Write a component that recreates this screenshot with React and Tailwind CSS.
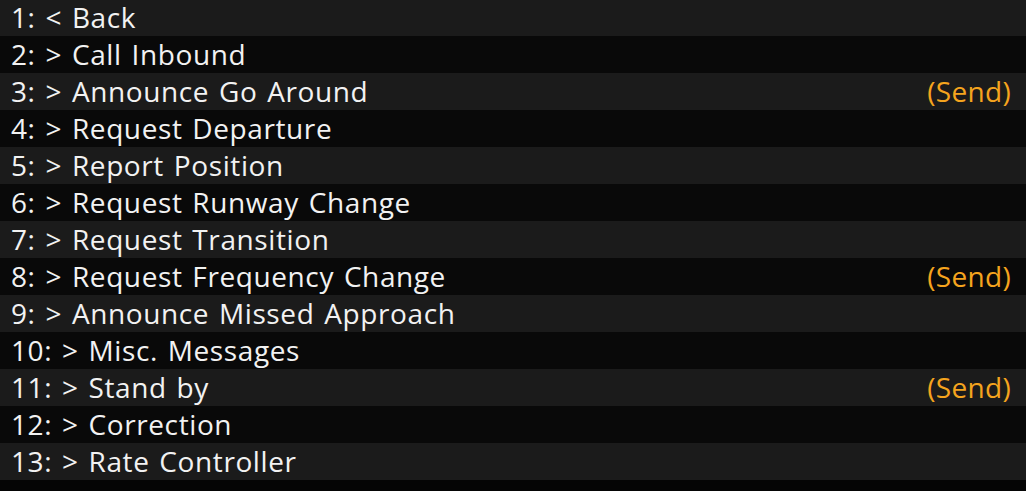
import React from "react";

const items = [
  { label: "1: < Back" },
  { label: "2: > Call Inbound" },
  { label: "3: > Announce Go Around", send: true },
  { label: "4: > Request Departure" },
  { label: "5: > Report Position" },
  { label: "6: > Request Runway Change" },
  { label: "7: > Request Transition" },
  { label: "8: > Request Frequency Change", send: true },
  { label: "9: > Announce Missed Approach" },
  { label: "10: > Misc. Messages" },
  { label: "11: > Stand by", send: true },
  { label: "12: > Correction" },
  { label: "13: > Rate Controller" },
];

export default function App() {
  return (
    <div
      className="w-[1026px] h-[491px] overflow-hidden bg-[#050505] text-[#f2f2f2]"
      style={{ fontFamily: '"Open Sans", "Noto Sans", sans-serif' }}
    >
      <div className="flex flex-col">
        {items.map((item, i) => (
          <div
            key={i}
            className={
              (i === 0 ? "h-[36px] pb-[2px] " : "h-[37px] pb-px ") +
              "flex items-center justify-between pl-[11px] pr-[15px] text-[28px] leading-none tracking-[0.6px] [word-spacing:2px] " +
              (i % 2 === 0 ? "bg-[#1b1b1b]" : "bg-[#090909]")
            }
          >
            <span className="whitespace-pre">{item.label}</span>
            {item.send && (
              <span className="text-[#f5a41e] tracking-[0.3px]">(Send)</span>
            )}
          </div>
        ))}
      </div>
    </div>
  );
}
